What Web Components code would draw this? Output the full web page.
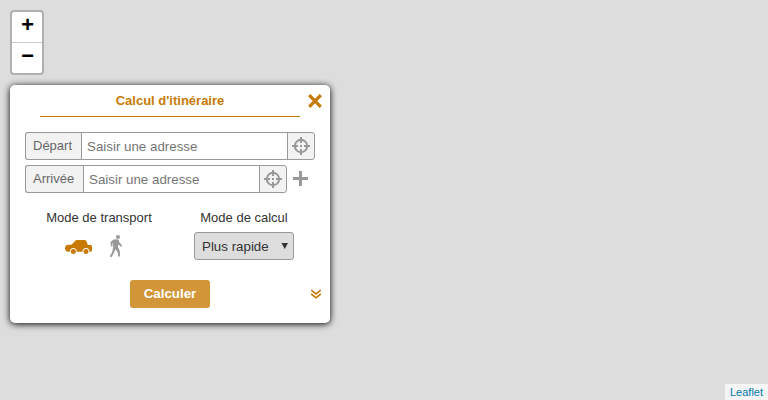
<!DOCTYPE html>
<html lang="fr"><head><meta charset="utf-8"><title>Itinéraire</title>
<style>html,body{margin:0;height:100%;overflow:hidden}body{font-family:"Liberation Sans",Arial,sans-serif;font-size:13px;color:#333}</style></head>
<body><map-view><zoom-control></zoom-control><route-panel></route-panel><map-credit>Leaflet</map-credit></map-view>
<script>
const define=(name,html)=>customElements.define(name,class extends HTMLElement{
  constructor(){super();this.attachShadow({mode:"open"}).innerHTML=html;}
});
define("map-view",`<style>:host{display:flex;flex-direction:column;align-items:flex-start;gap:10px;height:400px;box-sizing:border-box;padding:10px 0 0 10px;background:#ddd}
::slotted(map-credit){margin-top:auto;align-self:flex-end}</style><slot></slot>`);
define("map-credit",`<style>:host{display:block;background:rgba(255,255,255,.7);color:#0078A8;font-size:11px;line-height:16px;padding:0 5px}</style><slot></slot>`);
define("zoom-control",`<style>:host{display:block;border:2px solid rgba(0,0,0,.2);border-radius:4px;background:#fff;background-clip:padding-box}
div{width:30px;height:30px;text-align:center;color:#000;font:bold 22px/30px "Liberation Mono",monospace;text-indent:1px}
div:first-of-type{border-bottom:1px solid #ccc}</style><div>+</div><div>−</div>`);
define("target-icon",`<style>:host{display:block;width:18px;height:18px}svg{display:block}</style><svg width="18" height="18" fill="none" stroke="#999" stroke-width="2"><circle cx="9" cy="9" r="6.2"/><path d="M9 0v6M9 12v6M0 9h6M12 9h6M8 9h2"/></svg>`);
define("address-row",`<style>:host{display:flex;height:28px}*{box-sizing:border-box}
.label{width:var(--label,57px);border:1px solid #999;border-right:0;border-radius:3px 0 0 3px;background:#f2f2f2;color:#666;padding-left:7px;line-height:25px}
.field{flex:1;border:1px solid #999;color:#757575;font-size:13.33px;padding:1px 0 0 5px;line-height:26px;margin-left:-1px}
.loc{width:28px;margin-left:-1px;border:1px solid #999;border-radius:0 3px 3px 0;background:#f2f2f2;padding:4px}</style>
<div class="label"><slot></slot></div><div class="field">Saisir une adresse</div><div class="loc"><target-icon></target-icon></div><slot name="after"></slot>`);
define("mode-select",`<style>:host{box-sizing:border-box;display:flex;justify-content:space-between;width:100px;height:28px;border:1px solid #999;border-radius:3px;background:#ddd;font-size:13.33px;line-height:27px;padding:0 5px 0 7px}
svg{margin-top:10px}</style><span><slot></slot></span><svg width="7" height="6"><path d="M.5 0H7L3.75 6z" fill="#333"/></svg>`);
define("route-panel",`<style>:host{display:grid;grid-template-columns:290px;grid-template-rows:47px 28px 5px 28px 17px 70px 28px;box-sizing:border-box;width:320px;height:238px;background:#fff;border-radius:5px;box-shadow:0 1px 7px #000;padding:0 15px}
*{box-sizing:border-box}
header{display:grid;grid-template-columns:275px 22px;align-items:start}
h1{margin:0 0 0 15px;width:260px;height:32px;border-bottom:1px solid #c77a04;text-align:center;color:#c77a04;font-size:13px;line-height:31px}
.close{margin:9px 0 0 8px}
.depart{grid-row:2}.arrive{grid-row:4;--label:59px}
.plus{margin:6px 7px 0 6px}
.modes{grid-row:6;display:grid;grid-template-columns:148px 142px;line-height:15px}
.mode{display:flex;flex-direction:column;align-items:center}
.mode span{height:22px}
.icons{display:flex;gap:16px;width:70px}
.car{margin-top:7px;margin-left:1px}.walk{margin-top:3px}
footer{grid-row:7;display:grid;grid-template-columns:105px 80px 1fr}
button{grid-column:2;border:0;border-radius:3px;background:#d29537;color:#fff;font:bold 13.33px "Liberation Sans",sans-serif;padding:0 0 2px}
.more{justify-self:end;margin:9px -7px 0 0}
</style>
<header><h1>Calcul d'itinéraire</h1><svg class="close" width="14" height="14" stroke="#c77a04" stroke-width="3.2"><path d="M1.2 1.2l11.6 11.6M12.8 1.2L1.2 12.8"/></svg></header>
<address-row class="depart">Départ</address-row>
<address-row class="arrive">Arrivée<svg slot="after" class="plus" width="15" height="15"><path d="M6 0h3v6h6v3H9v6H6V9H0V6h6z" fill="#999"/></svg></address-row>
<div class="modes"><div class="mode"><span>Mode de transport</span><div class="icons">
<svg class="car" width="28" height="16" viewBox="0 0 28 16"><path fill="#c77a04" d="M0 9Q0 6.5 2 6L6.8 5.4 10.5 1.5Q11.3 1 12 1H19.5Q20.8 1 21.3 2L22.9 6H26Q27 6.3 27 8V11Q27 12.6 26 12.8H24.7Q24.3 9 21 9T17.4 12.8H11.8Q11.5 9 8.3 9T4.7 12.8H3Q0 12.5 0 9"/><circle cx="8.3" cy="12.6" r="2.5" fill="#c77a04"/><circle cx="21" cy="12.6" r="2.5" fill="#c77a04"/></svg>
<svg class="walk" width="14" height="22" viewBox="0 0 14 22"><circle cx="9" cy="2" r="2" fill="#999"/><path fill="#999" d="M4.5 4.6L8.7 4.3Q10 4.8 10.2 7L13 10.5 12.5 11.9 9.2 9.4 8.9 12 10.9 16.3V21.6H9.2L8.7 17.3 6.4 14.3 4.8 18 2.7 22 .7 21.4 3.2 17 4.1 12.2V7.7L3.5 8.3V11.6H2L1.5 7Z"/></svg></div></div>
<div class="mode"><span>Mode de calcul</span><mode-select>Plus rapide</mode-select></div></div>
<footer><button>Calculer</button><svg class="more" width="12" height="10" fill="none" stroke="#c77a04" stroke-width="1.6"><path d="M1.2 1.2L6 5 10.8 1.2M1.2 5L6 8.8 10.8 5"/></svg></footer>`);
</script></body></html>
